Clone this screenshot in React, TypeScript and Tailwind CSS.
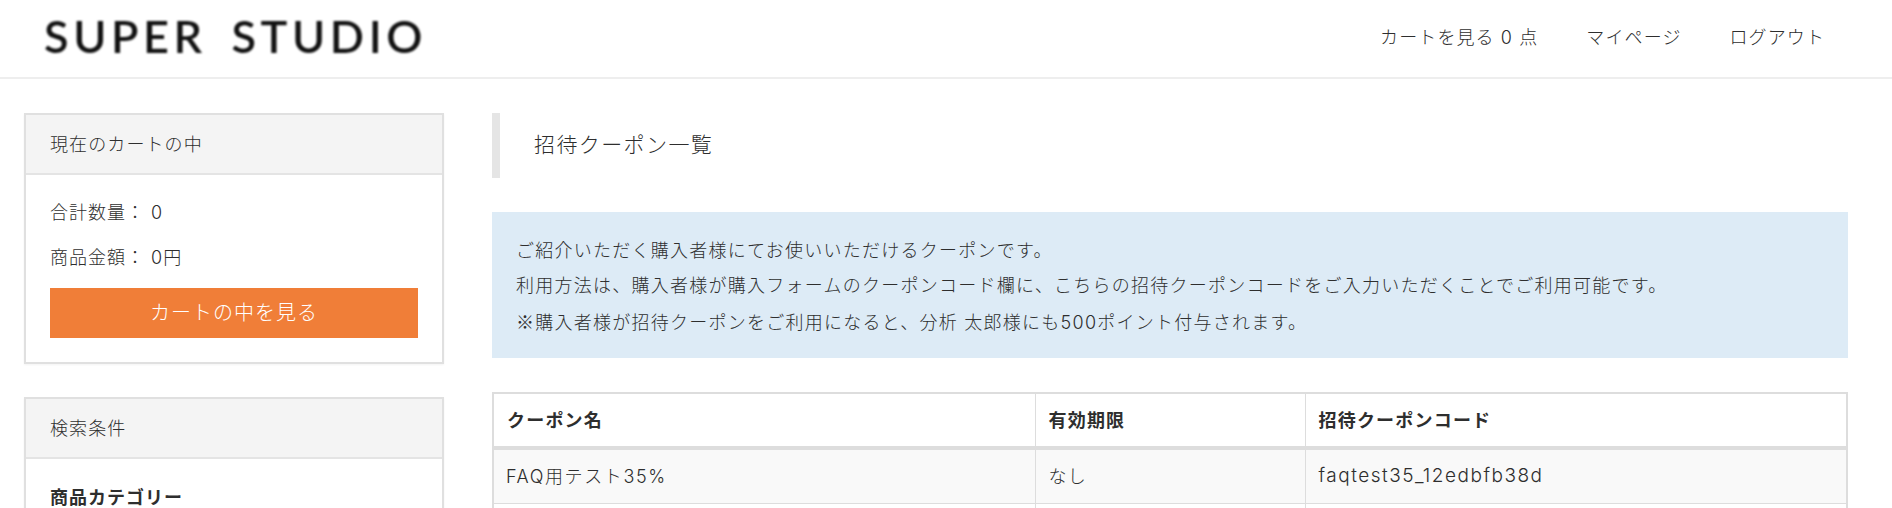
import React from "react";

const jp = "font-['Inter','Noto_Sans_CJK_JP',sans-serif]";

const Panel = ({title, children}: {title: string; children: React.ReactNode}) => {
    return <div className="border-2 border-[#e0e0e0] shadow-[0_1px_2px_rgba(0,0,0,0.05)]">
        <div className="h-[60px] flex items-center pl-[24px] bg-[#f4f4f4] border-b-2 border-[#e4e4e4] text-[18px] tracking-[1.1px] text-[#2e2e2e]">
            {title}
        </div>
        <div className="px-[24px]">{children}</div>
    </div>
}

export default function App() {
    return <div className={`${jp} h-[508px] overflow-hidden bg-white text-[#2e2e2e] font-light`}>
        <header className="h-[79px] border-b-2 border-[#eeeeee] flex items-center justify-between pl-[44px] pr-[67px]">
            <div className="font-['Lato',sans-serif] font-semibold text-[45px] leading-none tracking-[4.6px] [word-spacing:-3.5px] whitespace-pre text-[#111111] blur-[1.2px] -mt-[4px]">
                SUPER  STUDIO
            </div>
            <nav className="flex gap-[48px] text-[18px] tracking-[1.1px] -mt-[3px]">
                <span>カートを見る 0 点</span>
                <span>マイページ</span>
                <span>ログアウト</span>
            </nav>
        </header>

        <div className="flex items-start gap-[48px] pt-[34px] pl-[24px] pr-[44px]">
            <aside className="w-[420px] shrink-0 flex flex-col gap-[33px]">
                <Panel title="現在のカートの中">
                    <div className="pt-[22px] pb-[24px]">
                        <p className="text-[18px] tracking-[1px] leading-[32px]">合計数量： 0</p>
                        <p className="text-[18px] tracking-[1px] leading-[32px] mt-[13px]">商品金額： 0円</p>
                        <div className="mt-[14px] h-[50px] bg-[#f07e38] text-white text-[20px] tracking-[1px] flex items-center justify-center">
                            カートの中を見る
                        </div>
                    </div>
                </Panel>
                <Panel title="検索条件">
                    <div className="pt-[25px] pb-[24px] text-[18px] tracking-[1px] font-bold">商品カテゴリー</div>
                </Panel>
            </aside>

            <main className="flex-1 min-w-0">
                <h1 className="h-[65px] border-l-[8px] border-[#e5e5e5] pl-[34px] flex items-center text-[21px] tracking-[1.4px] font-light pb-[2px]">
                    招待クーポン一覧
                </h1>
                <div className="mt-[34px] h-[146px] bg-[#ddebf6] px-[24px] py-[21px] text-[18px] tracking-[1.25px] leading-[35.25px]">
                    <p>ご紹介いただく購入者様にてお使いいただけるクーポンです。</p>
                    <p>利用方法は、購入者様が購入フォームのクーポンコード欄に、こちらの招待クーポンコードをご入力いただくことでご利用可能です。</p>
                    <p><span className="font-['Noto_Sans_CJK_JP',sans-serif]">※</span>購入者様が招待クーポンをご利用になると、分析 太郎様にも500ポイント付与されます。</p>
                </div>
                <table className="mt-[34px] w-full border-collapse table-fixed border-2 border-[#dddddd] text-[18px] tracking-[1.2px]">
                    <colgroup>
                        <col className="w-[542px]"/>
                        <col className="w-[270px]"/>
                        <col/>
                    </colgroup>
                    <thead>
                        <tr className="h-[55px] border-b-4 border-[#dddddd]">
                            <th className="border border-[#dddddd] pl-[13px] text-left font-bold">クーポン名</th>
                            <th className="border border-[#dddddd] pl-[13px] text-left font-bold">有効期限</th>
                            <th className="border border-[#dddddd] pl-[13px] text-left font-bold">招待クーポンコード</th>
                        </tr>
                    </thead>
                    <tbody>
                        <tr className="h-[55px] bg-[#f9f9f9] border-b border-[#dddddd]">
                            <td className="border border-[#dddddd] pl-[12px] tracking-[1.6px]">FAQ用テスト35%</td>
                            <td className="border border-[#dddddd] pl-[13px]">なし</td>
                            <td className="border border-[#dddddd] pl-[13px] text-[19px] tracking-[1.5px]">faqtest35_12edbfb38d</td>
                        </tr>
                        <tr className="h-[53px]">
                            <td className="border border-[#dddddd]"></td>
                            <td className="border border-[#dddddd]"></td>
                            <td className="border border-[#dddddd]"></td>
                        </tr>
                    </tbody>
                </table>
            </main>
        </div>
    </div>
}
